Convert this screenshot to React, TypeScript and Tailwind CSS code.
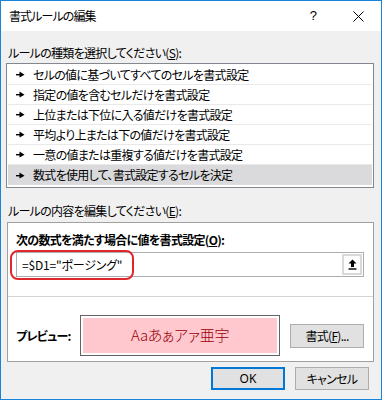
import React from "react";

const jp = "font-['Noto_Sans_CJK_JP',sans-serif] [font-feature-settings:'palt']";

const rules = [
  "セルの値に基づいてすべてのセルを書式設定",
  "指定の値を含むセルだけを書式設定",
  "上位または下位に入る値だけを書式設定",
  "平均より上または下の値だけを書式設定",
  "一意の値または重複する値だけを書式設定",
  "数式を使用して、書式設定するセルを決定",
];

const Pointer: React.FC = () => (
  <svg width="9" height="7" viewBox="0 0 9 7" className="shrink-0">
    <rect x="0" y="3" width="4" height="1.4" fill="#000" />
    <polygon points="3.5,0.5 8.5,3.7 3.5,6.5" fill="#000" />
  </svg>
);

const App: React.FC = () => {
  const selected = 5;

  return (
    <div className={`w-[382px] h-[400px] border border-[#1883d7] flex flex-col bg-[#f0f0f0] text-[12px] tracking-[-0.7px] text-black ${jp}`}>
      {/* title bar */}
      <div className="h-[30px] bg-white flex items-center shrink-0">
        <span className="pl-[8px] text-[12px] tracking-[-0.9px]">書式ルールの編集</span>
        <div className="ml-auto flex items-center h-full">
          <div className="w-[46px] h-full flex items-center justify-center text-[13px] font-['Liberation_Sans',sans-serif]">?</div>
          <div className="w-[45px] h-full flex items-center justify-center">
            <svg width="11" height="11" viewBox="0 0 11 11">
              <path d="M0.5 0.5 L10.5 10.5 M10.5 0.5 L0.5 10.5" stroke="#000" strokeWidth="1" />
            </svg>
          </div>
        </div>
      </div>

      {/* body */}
      <div className="flex-1 px-[5px] flex flex-col">
        <div className="mt-[14px] pl-[2px] h-[16px] leading-[16px]">
          ルールの種類を選択してください(<span className="underline">S</span>):
        </div>

        <div className="mt-[2px] w-[368px] h-[125px] border border-[#828790] bg-white pt-[1px] px-[1px]">
          {rules.map((r, i) => (
            <div
              key={r}
              className={`h-[20px] flex items-center gap-[8px] pl-[8px] ${
                i < rules.length - 1 ? "border-b border-[#e9e9e9]" : ""
              } ${i === selected ? "bg-[#dadadd]" : ""}`}
            >
              <Pointer />
              <span className="leading-[16px]">{r}</span>
            </div>
          ))}
        </div>

        <div className="mt-[15px] pl-[2px] h-[16px] leading-[16px]">
          ルールの内容を編集してください(<span className="underline">E</span>):
        </div>

        <div className="mt-[3px] ml-[1px] w-[367px] h-[140px] border border-[#a0a0a0] bg-white flex flex-col">
          <div className="pt-[9px] pl-[8px] h-[25px] leading-[16px] font-bold">
            次の数式を満たす場合に値を書式設定(<span className="underline">O</span>):
          </div>

          <div className="relative mt-[4px] ml-[8px] w-[348px] h-[25px] border border-[#abadb3] flex items-center">
            <span className="pl-[5px] leading-[16px] tracking-[-0.2px]">=$D1="ポージング"</span>
            <div className="ml-auto mr-[1px] w-[20px] h-[21px] bg-[#d9d9d9] p-[2px]">
              <div className="w-full h-full bg-white flex items-center justify-center">
                <svg width="9" height="11" viewBox="0 0 9 11">
                  <polygon points="4.5,0.5 8.5,4.5 6,4.5 6,8 3,8 3,4.5 0.5,4.5" fill="#000" />
                  <rect x="0.5" y="9.3" width="8" height="1.4" fill="#000" />
                </svg>
              </div>
            </div>
            <div className="absolute left-[-7px] top-[-3px] w-[124px] h-[30px] rounded-[8px] border-2 border-[#e0262a]" />
          </div>

          <div className="mt-[19px] h-px bg-[#d5d5d5]" />

          <div className="mt-[18px] flex items-center">
            <div className="pl-[8px] w-[72px] font-bold leading-[16px]">プレビュー:</div>
            <div className="w-[200px] h-[41px] border border-[#646464] p-[2px]">
              <div className="w-full h-full bg-[#ffc7ce] flex items-center justify-center text-[15px] tracking-[-0.3px] font-light text-[#9c0006]">
                Aaあぁアァ亜宇
              </div>
            </div>
            <div className="ml-[10px] w-[74px] h-[24px] bg-[#e1e1e1] border border-[#adadad] flex items-center justify-center">
              書式(<span className="underline">F</span>)...
            </div>
          </div>
        </div>

        <div className="mt-[5px] flex justify-end gap-[10px] mr-[7px]">
          <div className="w-[74px] h-[23px] bg-[#e1e1e1] border-2 border-[#0078d7] flex items-center justify-center font-['Noto_Sans',sans-serif] tracking-normal">
            OK
          </div>
          <div className="w-[74px] h-[23px] bg-[#e1e1e1] border border-[#adadad] flex items-center justify-center">
            キャンセル
          </div>
        </div>
      </div>
    </div>
  );
};

export default App;
